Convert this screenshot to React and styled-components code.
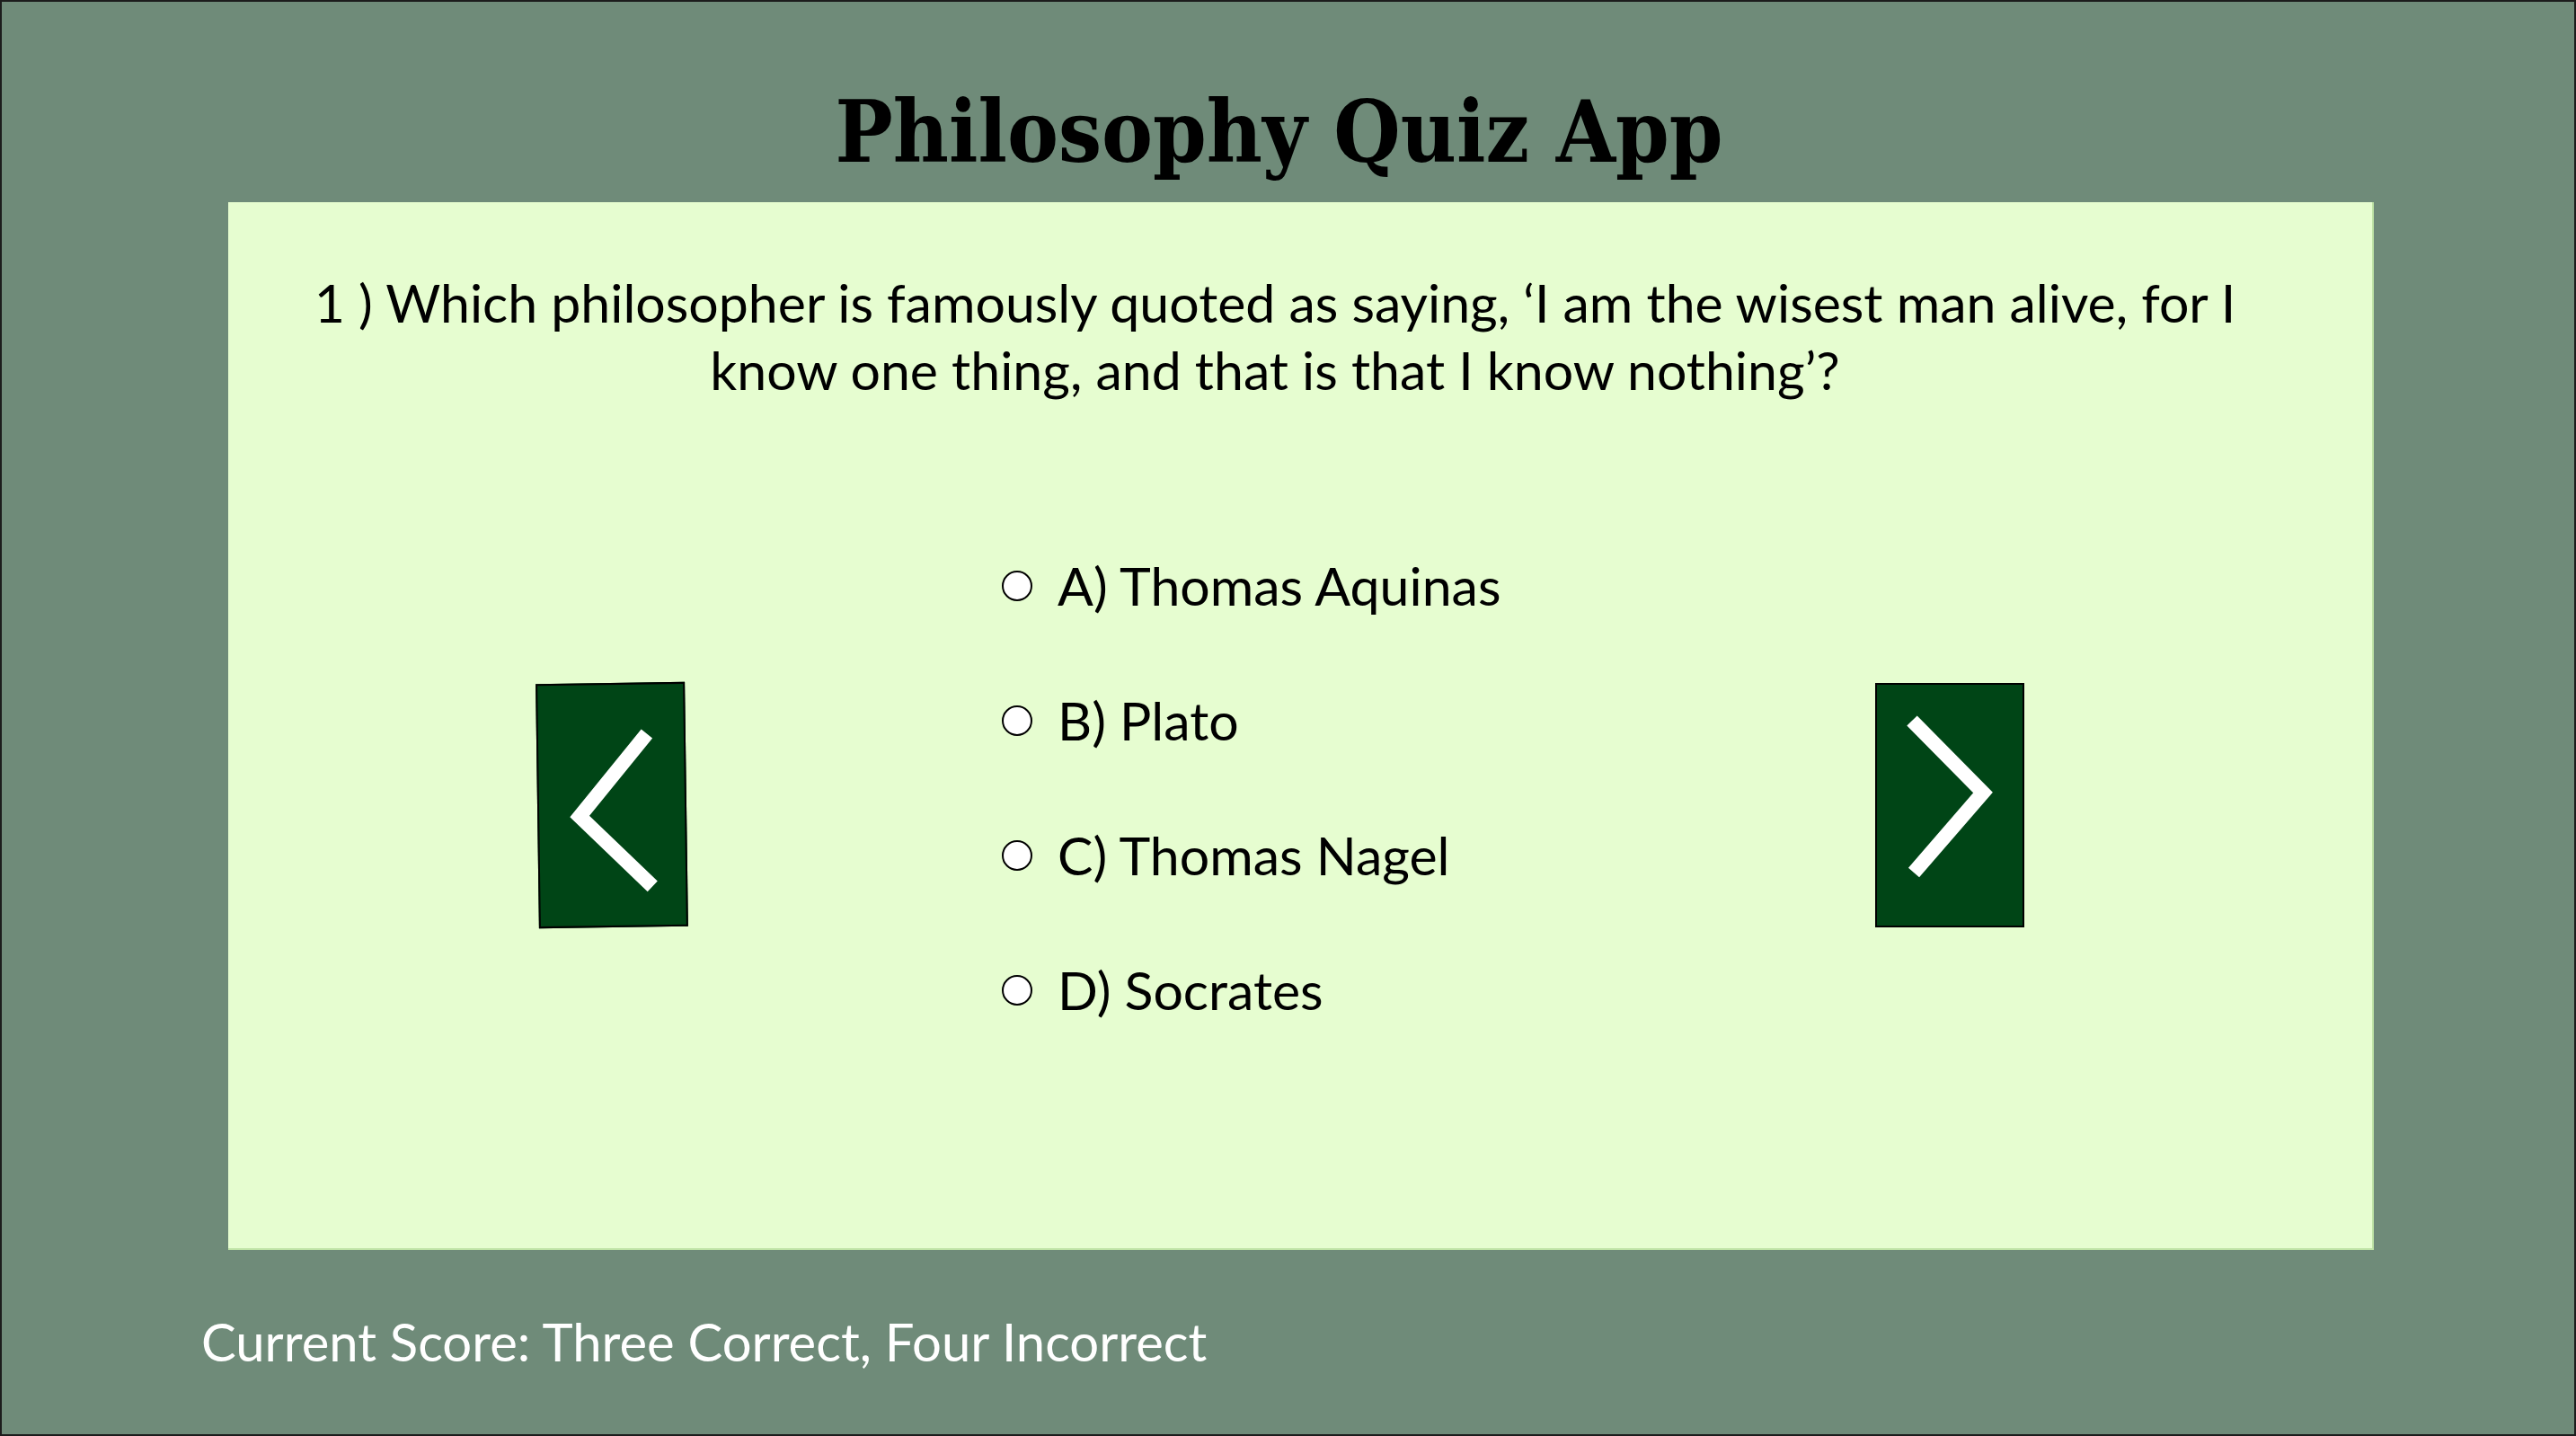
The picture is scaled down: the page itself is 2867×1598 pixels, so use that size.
import styled, { createGlobalStyle } from 'styled-components'

const quiz = {
  number: 1,
  question: 'Which philosopher is famously quoted as saying, ‘I am the wisest man alive, for I know one thing, and that is that I know nothing’?',
  options: [
    { key: 'A', label: 'Thomas Aquinas' },
    { key: 'B', label: 'Plato' },
    { key: 'C', label: 'Thomas Nagel' },
    { key: 'D', label: 'Socrates' },
  ],
  score: 'Three Correct, Four Incorrect',
}

const GlobalStyle = createGlobalStyle`
  html, body {
    margin: 0;
    padding: 0;
  }
  body {
    font-family: Lato, "Open Sans", sans-serif;
    font-size: 59px;
  }
`

const Page = styled.div`
  box-sizing: border-box;
  width: 100vw;
  height: 100vh;
  border: 2px solid #1c1c1c;
  background: #6f8b79;
  overflow: hidden;
`

const Title = styled.h1`
  margin: 0;
  padding: 97px 20px 0 0;
  height: 223px;
  box-sizing: border-box;
  text-align: center;
  font-family: "DejaVu Serif Condensed", "DejaVu Serif", serif;
  font-stretch: condensed;
  font-weight: 700;
  font-size: 95px;
  line-height: 1;
  color: #000;
`

const Panel = styled.main`
  box-sizing: border-box;
  margin-left: 252px;
  width: 2388px;
  height: 1166px;
  padding-top: 74px;
  background: #e6fdd0;
  border-right: 2px solid #bfe3a6;
  border-bottom: 2px solid #bfe3a6;
`

const Question = styled.p`
  margin: 0 auto;
  width: 2200px;
  padding-right: 56px;
  text-align: center;
  line-height: 75px;
  color: #000;
`

const Stage = styled.div`
  display: grid;
  grid-template-columns: 166px 1fr 166px;
  align-items: start;
  margin-top: 163px;
  padding: 0 387px 0 344px;
`

const NavButton = styled.button`
  box-sizing: border-box;
  width: 166px;
  height: 272px;
  margin-top: ${p => p.$offset}px;
  padding: 0;
  border: 2px solid #000;
  background: #004516;
  transform: rotate(${p => p.$tilt || 0}deg);
  cursor: pointer;

  svg {
    display: block;
  }
`

const Options = styled.ul`
  list-style: none;
  margin: 0;
  padding: 0 0 0 351px;
  display: flex;
  flex-direction: column;
  gap: 70px;
`

const Option = styled.li`
  display: flex;
  align-items: center;
  gap: 28px;
  line-height: 80px;
  color: #000;
`

const Radio = styled.input`
  appearance: none;
  box-sizing: border-box;
  width: 34px;
  height: 34px;
  margin: 0;
  border: 2px solid #000;
  border-radius: 50%;
  background: #fff;
  flex-shrink: 0;
`

const Score = styled.p`
  margin: 67px 0 0;
  padding-left: 222px;
  font-size: 58px;
  line-height: 70px;
  color: #fff;
`

const Chevron = ({ points }) => (
  <svg width="162" height="268" viewBox="2 2 162 268">
    <polyline
      points={points}
      fill="none"
      stroke="#fff"
      strokeWidth="16"
      strokeLinecap="butt"
      strokeLinejoin="miter"
    />
  </svg>
)

export default function App() {
  return (
    <>
      <GlobalStyle />
      <Page>
        <Title>Philosophy Quiz App</Title>
        <Panel>
          <Question>
            {quiz.number} ) {quiz.question}
          </Question>
          <Stage>
            <NavButton $offset={148} $tilt={-0.8} aria-label="Previous question">
              <Chevron points="123,57 47,148 127,227" />
            </NavButton>
            <Options>
              {quiz.options.map(o => (
                <Option key={o.key}>
                  <Radio type="radio" name="answer" value={o.key} />
                  <span>{o.key}) {o.label}</span>
                </Option>
              ))}
            </Options>
            <NavButton $offset={148} aria-label="Next question">
              <Chevron points="41,42 120,122 43,211" />
            </NavButton>
          </Stage>
        </Panel>
        <Score>Current Score: {quiz.score}</Score>
      </Page>
    </>
  )
}
